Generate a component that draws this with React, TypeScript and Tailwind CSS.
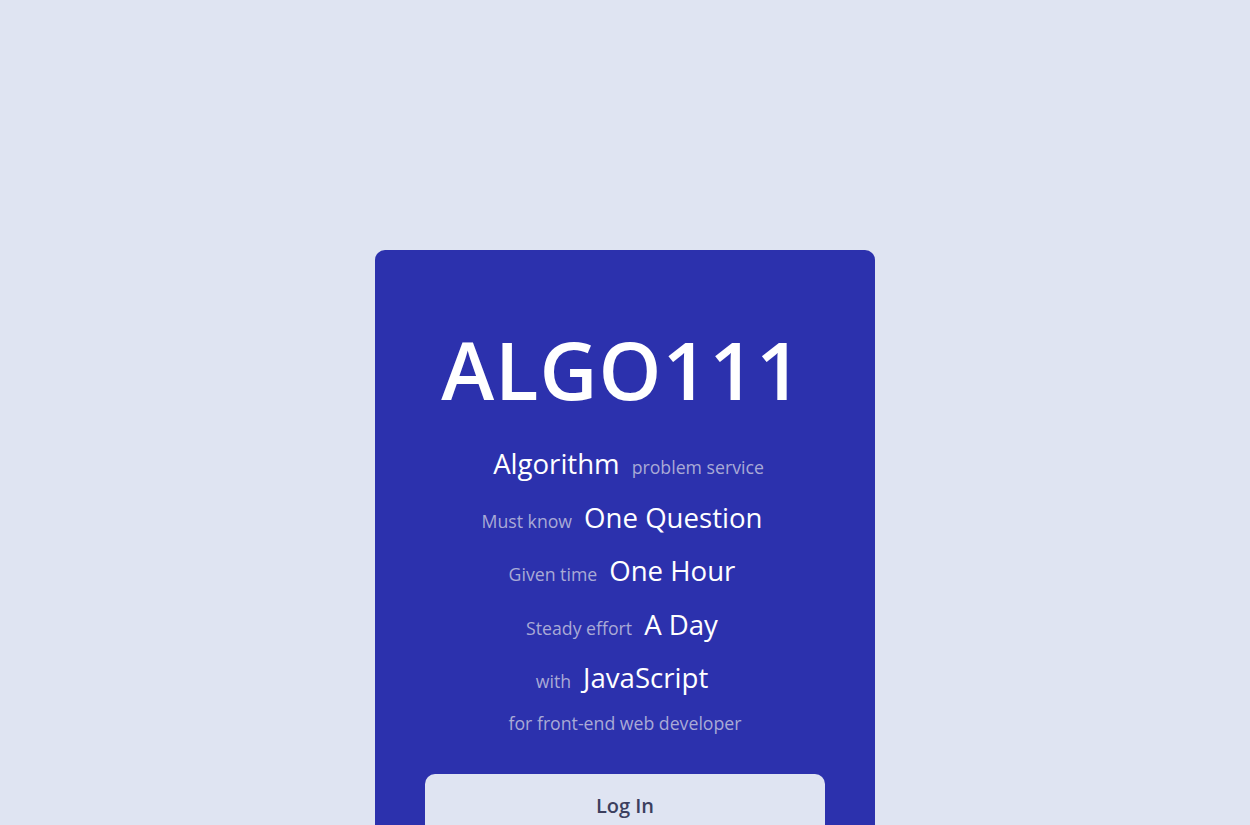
const lines: { small: string; big: string; smallFirst: boolean; pad: string }[] = [
  { big: "Algorithm", small: "problem service", smallFirst: false, pad: "pl-[7px]" },
  { small: "Must know", big: "One Question", smallFirst: true, pad: "pr-[6px]" },
  { small: "Given time", big: "One Hour", smallFirst: true, pad: "pr-[6px]" },
  { small: "Steady effort", big: "A Day", smallFirst: true, pad: "pr-[6px]" },
  { small: "with", big: "JavaScript", smallFirst: true, pad: "pr-[6px]" },
];

function Small({ children }: { children: string }) {
  return <span className="text-[17.7px] leading-none text-[#a9aad6]">{children}</span>;
}

function Big({ children }: { children: string }) {
  return <span className="text-[27.6px] leading-[53.5px] text-white">{children}</span>;
}

export default function App() {
  return (
    <div
      className="min-h-screen bg-[#dfe4f2] flex justify-center pt-[250px]"
      style={{ fontFamily: '"Open Sans", "Noto Sans", sans-serif' }}
    >
      <div className="w-[500px] bg-[#2c31ad] rounded-[10px] pt-[79px] pb-10 px-[50px] flex flex-col items-center">
        <h1 className="text-[80px] leading-none text-white font-semibold tracking-[1px] pr-[6px]">
          ALGO111
        </h1>

        <div className="mt-[28px] flex flex-col w-full">
          {lines.map((l) => (
            <div
              key={l.big}
              className={`flex items-baseline justify-center gap-3 h-[53.5px] ${l.pad}`}
            >
              {l.smallFirst ? (
                <>
                  <Small>{l.small}</Small>
                  <Big>{l.big}</Big>
                </>
              ) : (
                <>
                  <Big>{l.big}</Big>
                  <Small>{l.small}</Small>
                </>
              )}
            </div>
          ))}
          <div className="text-center text-[17.7px] leading-[37px] text-[#a9aad6]">
            for front-end web developer
          </div>
        </div>

        <button className="mt-8 w-full h-[64px] rounded-[10px] bg-[#dfe4f2] text-[#3c3f5e] text-[20px] font-semibold">
          Log In
        </button>
      </div>
    </div>
  );
}
